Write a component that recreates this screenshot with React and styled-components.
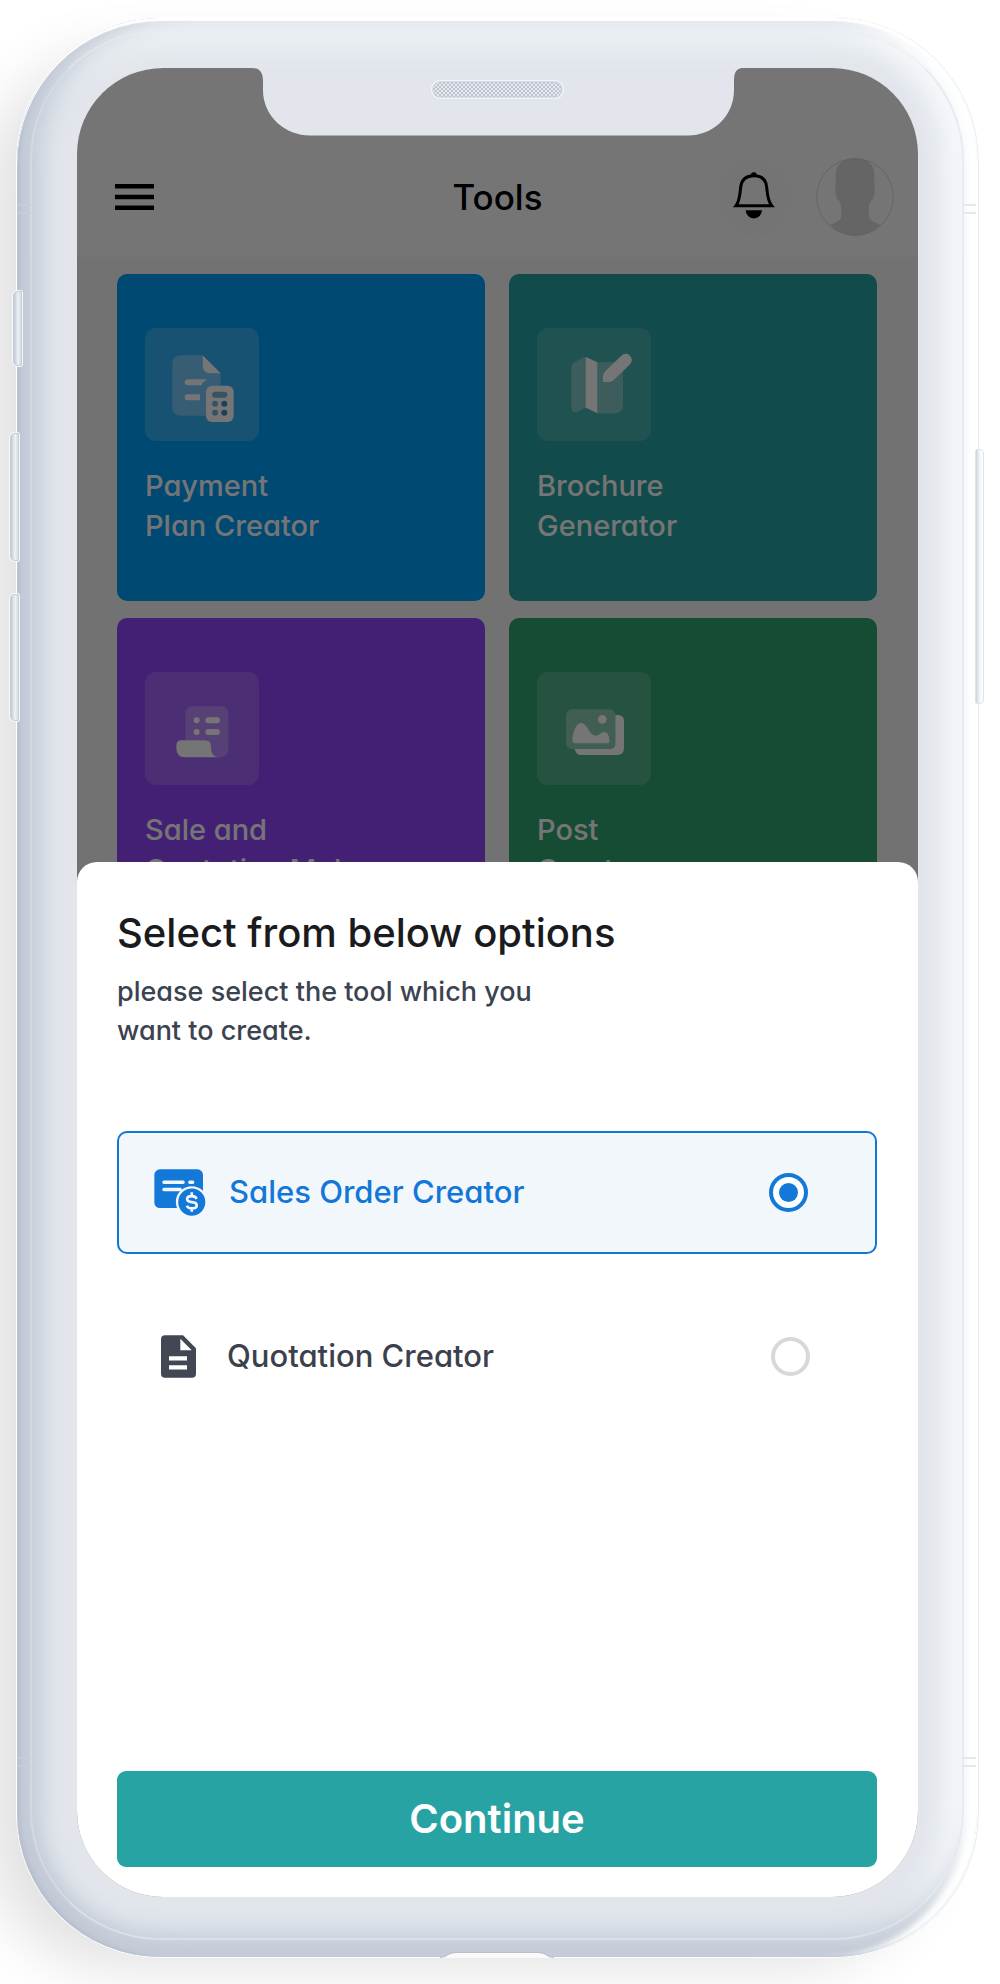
import React, { useState } from 'react';
import styled, { createGlobalStyle, css } from 'styled-components';

const GlobalStyle = createGlobalStyle`
  *, *::before, *::after { box-sizing: border-box; }
  body {
    margin: 0;
    background: #ffffff;
    font-family: Inter, "Open Sans", "Liberation Sans", sans-serif;
    font-feature-settings: "cv11";
    -webkit-font-smoothing: antialiased;
  }
  h1, h2, h3, p { margin: 0; }
  button, input { font: inherit; font-feature-settings: inherit; }
`;

const Page = styled.div`
  display: flex;
  min-height: 100vh;
  padding: 18px 23px 27px 17px;
  overflow: hidden;
`;

const Phone = styled.div`
  position: relative;
  display: flex;
  flex: 1;
  min-width: 0;
  padding: 50px 59px 60px 60px;
  border-radius: 144px;
  background: #e2e6ec;
  box-shadow:
    inset 0 3px 1px 0 #ffffff,
    inset 3px -1px 3px 0 #b8c0ce,
    inset -14px 0 6px -2px #fdfefe,
    inset 26px 0 26px -4px #c0c8d5,
    inset 0 -28px 26px -4px #c3cbd6,
    inset -34px 0 24px -2px #f7f9fb,
    inset 0 32px 26px -4px #eef2f5,
    0 0 0 1px #ffffff,
    1px 0 0 1px #ececec,
    -44px 24px 60px -14px rgba(0, 0, 0, 0.12);
`;

const Rim = styled.div`
  position: absolute;
  inset: 12px 13px 17px 13px;
  border: 2px solid;
  border-color: rgba(232, 237, 243, 0.5) rgba(228, 234, 241, 0.9) rgba(224, 229, 237, 0.7) rgba(216, 222, 231, 0.7);
  border-radius: 130px;
  pointer-events: none;
`;

const SideKey = styled.span`
  position: absolute;
  top: ${(p) => p.$top}px;
  height: ${(p) => p.$height}px;
  width: 9px;
  border: 1px solid #c5ccd6;
  background: linear-gradient(90deg, #c3cad5, #eef2f6 60%, #d5dbe4);
  ${(p) =>
    p.$side === 'left'
      ? css`left: ${p.$slim ? -4 : -7}px; border-radius: 5px 2px 2px 5px; box-shadow: 0 0 0 1px #f7f8fa;`
      : css`right: -7px; border-color: #dfe4ea; background: linear-gradient(90deg, #ccd3dd, #f2f5f8 50%, #ffffff); border-radius: 2px 4px 4px 2px;`}
`;

const Antenna = styled.span`
  position: absolute;
  ${(p) => (p.$edge === 'top' ? 'top: 186px;' : 'bottom: 190px;')}
  ${(p) => (p.$side === 'left' ? 'left: 1px;' : 'right: 1px;')}
  width: 13px;
  height: 10px;
  border: solid ${(p) => (p.$side === 'left' ? '#c6cdd8' : '#e3e8ef')};
  border-width: 2px 0;
`;

const BottomLip = styled.svg`
  position: absolute;
  bottom: -1px;
  left: 50%;
  width: 114px;
  height: 8px;
  transform: translateX(-50%);
`;

const Screen = styled.div`
  position: relative;
  display: grid;
  flex: 1;
  min-width: 0;
  grid-template: 1fr / 1fr;
  overflow: hidden;
  border-radius: 86px;
  background: #f8f8f8;
`;

const NotchShape = styled.svg`
  position: absolute;
  top: -1px;
  left: 50%;
  width: 492px;
  height: 69px;
  transform: translateX(-50%);
`;

const ToolsView = styled.main`
  position: relative;
  grid-area: 1 / 1;
  min-width: 0;
`;

const Dim = styled.div`
  position: absolute;
  inset: 0;
  background: rgba(0, 0, 0, 0.54);
`;

const TopBar = styled.header`
  display: grid;
  grid-template-columns: 1fr auto 1fr;
  align-items: center;
  height: 189px;
  padding: 68px 24px 0;
  background: #ffffff;
`;

const IconButton = styled.button`
  display: flex;
  width: fit-content;
  padding: ${(p) => (p.$round ? '0' : '14px')};
  border: 0;
  border-radius: ${(p) => (p.$round ? '50%' : '0')};
  background: ${(p) => (p.$round ? '#fcfcfc' : 'transparent')};
  color: #000000;
`;

const BarTitle = styled.h1`
  font-size: 35px;
  line-height: 48px;
  font-weight: 500;
  color: #000000;
`;

const Actions = styled.div`
  display: flex;
  align-items: center;
  justify-content: flex-end;
  gap: 22px;
`;

const CardGrid = styled.section`
  display: grid;
  grid-template-columns: 1fr 1fr;
  gap: 17px 24px;
  padding: 17px 41px 0 40px;
`;

const Card = styled.article`
  display: flex;
  flex-direction: column;
  align-items: flex-start;
  gap: 25px;
  height: 327px;
  padding: 54px 28px;
  border-radius: 10px;
  background: ${(p) => p.$color};
`;

const Tile = styled.div`
  display: flex;
  width: 114px;
  height: 113px;
  border-radius: 11px;
  background: rgba(255, 255, 255, ${(p) => p.$alpha});
`;

const CardTitle = styled.h2`
  font-size: 29px;
  line-height: 40px;
  font-weight: 500;
  color: #ffffff;
  white-space: pre-line;
`;

const Sheet = styled.form`
  position: relative;
  grid-area: 1 / 1;
  display: flex;
  flex-direction: column;
  min-width: 0;
  margin-top: 794px;
  padding: 45px 41px 30px 40px;
  border-radius: 20px 20px 0 0;
  background: #ffffff;
`;

const SheetTitle = styled.h2`
  font-size: 40px;
  line-height: 52px;
  font-weight: 500;
  color: #1b1b1d;
`;

const Hint = styled.p`
  max-width: 440px;
  margin-top: 13px;
  font-size: 27px;
  line-height: 39px;
  font-weight: 500;
  color: #3b4350;
`;

const Options = styled.div`
  display: flex;
  flex-direction: column;
  gap: 41px;
  margin-top: 81px;
`;

const Option = styled.label`
  display: flex;
  align-items: center;
  gap: 23px;
  height: 123px;
  padding: 0 67px 0 35px;
  border-radius: 10px;
  font-size: 31px;
  line-height: 40px;
  font-weight: 500;
  color: #3b414c;
  cursor: pointer;
  ${(p) =>
    p.$selected &&
    css`
      border: 2px solid #1277d4;
      background: #f2f7fc;
      color: #1277d6;
    `}
`;

const OptionIcon = styled.span`
  display: flex;
  justify-content: center;
  width: 52px;
`;

const OptionName = styled.span`
  flex: 1;
  padding-bottom: 2px;
`;

const Radio = styled.input`
  appearance: none;
  display: grid;
  place-items: center;
  width: 39px;
  height: 39px;
  margin: 0;
  border: 4px solid #d8d8d8;
  border-radius: 50%;
  background: #ffffff;

  &:checked { border-color: #1478d8; }
  &:checked::before {
    content: "";
    width: 19px;
    height: 19px;
    border-radius: 50%;
    background: #1478d8;
  }
`;

const Continue = styled.button`
  height: 96px;
  margin-top: auto;
  border: 0;
  border-radius: 9px;
  background: #28a3a3;
  color: #ffffff;
  font-size: 40px;
  line-height: 48px;
  font-weight: 600;
`;

const MenuIcon = () => (
  <svg width="39" height="26" viewBox="0 0 39 26" aria-hidden="true">
    <path d="M0 2.3h39M0 13h39M0 23.7h39" stroke="currentColor" strokeWidth="4.4" />
  </svg>
);

const BellIcon = () => (
  <svg width="80" height="80" viewBox="643 470 240 240" aria-hidden="true">
    <path d="M709 616C720 602 721 582 723 560C726 536 740 526 762 526C785 526 799 536 801 560C803 582 804 602 816 616Z" fill="none" stroke="#000" strokeWidth="9" />
    <path d="M754 528v-5a8 7 0 0 1 17 0v5zM738 630h49a24 24 0 0 1-49 0z" />
  </svg>
);

const Avatar = () => (
  <svg width="78" height="78" viewBox="948 474 236 236" role="img" aria-label="Profile">
    <circle cx="1066" cy="592" r="117" fill="#fff" />
    <path fill="#dcdcdc" d="M1007 525C1007 490 1035 475 1066 475C1100 475 1125 492 1125 525L1124 558Q1128 562 1125 580Q1122 600 1116 602Q1108 612 1108 625V655Q1110 662 1143 677Q1108 709 1066 709Q1024 709 990 677Q1022 664 1024 655V625Q1024 612 1016 602Q1010 600 1007 580Q1004 562 1008 558Z" />
    <circle cx="1066" cy="592" r="116" fill="none" stroke="#b9c8e4" strokeWidth="2" />
  </svg>
);

const PaymentIcon = () => (
  <svg width="114" height="113" viewBox="135 203 342 339" fill="#fff" aria-hidden="true">
    <path opacity=".33" d="M243 285H308V315Q310 339 332 339H362V376H342Q318 376 318 400V466H243Q217 466 217 440V311Q217 285 243 285Z" />
    <path d="M308 285L362 339H330Q308 339 308 315ZM263 357H322Q310 362 304 375H263a9 9 0 0 1 0-18ZM263 402H300V420H263a9 9 0 0 1 0-18Z" />
    <rect x="318" y="376" width="83" height="109" rx="18" />
    <rect x="336" y="394" width="46" height="18" rx="9" fill="#76b4dc" />
    <g fill="#378fc4">
      <circle cx="345" cy="430" r="9" fill="#76b0d4" />
      <circle cx="373" cy="430" r="9" />
      <circle cx="345" cy="457" r="9" fill="#76b0d4" />
      <circle cx="373" cy="457" r="9" />
    </g>
  </svg>
);

const BrochureIcon = () => (
  <svg width="114" height="113" viewBox="111 203 342 339" fill="#fff" aria-hidden="true">
    <path opacity=".33" d="M214 322Q214 310 226 304L248 293Q253 290 257 291V443Q248 444 240 451Q214 465 214 440ZM292 306H345Q369 306 369 330V435Q369 459 345 459H292Z" />
    <path d="M257 291Q262 291 266 294L292 306V459L266 446Q262 443 257 443ZM309 365V350Q309 340 316 333L364 286a18 18 0 0 1 26 26L342 358Q335 365 325 365Z" />
  </svg>
);

const ReceiptIcon = () => (
  <svg width="114" height="113" viewBox="135 185 342 339" fill="#fff" aria-hidden="true">
    <path opacity=".26" d="M280 288H361q24 0 24 24V415q0 26-27 26Q333 440 333 415V408Q333 390 315 390H256V312q0-24 24-24Z" />
    <path d="M245 390H315Q333 390 333 408V415Q335 440 358 441H255Q229 440 229 412V406Q229 390 245 390Z" />
    <circle cx="290" cy="330" r="9" />
    <circle cx="290" cy="365" r="9" />
    <rect x="316" y="321" width="44" height="18" rx="9" />
    <rect x="316" y="356" width="44" height="18" rx="9" />
  </svg>
);

const GalleryIcon = () => (
  <svg width="114" height="113" viewBox="111 185 342 339" fill="#fff" aria-hidden="true">
    <rect opacity=".33" x="198" y="297" width="148" height="119" rx="18" />
    <path d="M346 314h8q18 0 18 18V414q0 20-20 20H243q-14 0-19-18H328q18 0 18-18Z" />
    <circle cx="307" cy="327" r="13" />
    <path d="M217 390C217 368 228 338 243 338C262 338 268 376 286 376C300 376 302 365 314 365C324 365 328 380 329 392Q329 399 320 399H226Q217 399 217 390Z" />
  </svg>
);

const OrderIcon = () => (
  <svg width="52" height="47" viewBox="161 147 157 142" aria-hidden="true">
    <rect x="162" y="148" width="147" height="117" rx="17" fill="#1478d8" />
    <path d="M191 187H249M269 187H278M191 209H240" stroke="#f2f7fc" strokeWidth="10" strokeLinecap="round" />
    <circle cx="275" cy="247" r="48" fill="#f2f7fc" />
    <circle cx="275" cy="247" r="41" fill="#1478d8" />
    <path d="M275 217V228M275 265V276M290 237Q286 229 275 229Q261 229 261 238Q261 246 275 247Q290 248 290 257Q290 266 275 266Q264 266 260 258" fill="none" stroke="#f2f7fc" strokeWidth="8" />
  </svg>
);

const DocumentIcon = () => (
  <svg width="35" height="43" viewBox="180 645 105 128" aria-hidden="true">
    <path d="M192 645H246L285 684V761q0 12-12 12H192q-12 0-12-12V657q0-12 12-12Z" fill="#424853" />
    <path d="M238 656V690H272ZM204 708h54v13h-54zM204 735h54v13h-54z" fill="#fff" />
  </svg>
);

const Notch = () => (
  <NotchShape viewBox="0 0 492 69" aria-hidden="true">
    <defs>
      <pattern id="mesh" width="4" height="4" patternUnits="userSpaceOnUse">
        <rect width="4" height="4" fill="#e6e9ee" />
        <path d="M0 0l4 4M4 0l-4 4" stroke="#bfc5d0" strokeWidth="1" />
      </pattern>
    </defs>
    <path d="M0 0H492V1H491C484 1 482 6 482 14V23C482 50 460 68.500 436 68.500H58C34 68.500 11 50 11 23V14C11 6 8 1 0 1Z" fill="#e2e6ec" />
    <rect x="179" y="13" width="133" height="19" rx="9" fill="#f1f4f7" />
    <rect x="181" y="15" width="129" height="15" rx="7" fill="url(#mesh)" stroke="#c3c9d5" />
  </NotchShape>
);

const tools = [
  { title: 'Payment\nPlan Creator', color: '#009ffa', alpha: 0.2, Icon: PaymentIcon },
  { title: 'Brochure\nGenerator', color: '#25a3a3', alpha: 0.17, Icon: BrochureIcon },
  { title: 'Sale and\nQuotation Maker', color: '#9446fe', alpha: 0.17, Icon: ReceiptIcon },
  { title: 'Post\nCreator', color: '#30a771', alpha: 0.17, Icon: GalleryIcon },
];

const choices = [
  { id: 'sales-order', name: 'Sales Order Creator', Icon: OrderIcon },
  { id: 'quotation', name: 'Quotation Creator', Icon: DocumentIcon },
];

export default function App() {
  const [choice, setChoice] = useState('sales-order');

  return (
    <>
      <GlobalStyle />
      <Page>
        <Phone>
          <SideKey $side="left" $slim $top={273} $height={75} />
          <SideKey $side="left" $top={415} $height={128} />
          <SideKey $side="left" $top={576} $height={127} />
          <SideKey $side="right" $top={431} $height={255} />
          <Rim />
          <Antenna $side="left" $edge="top" />
          <Antenna $side="right" $edge="top" />
          <Antenna $side="left" $edge="bottom" />
          <Antenna $side="right" $edge="bottom" />
          <BottomLip viewBox="0 0 114 8" aria-hidden="true">
            <path d="M0 8C7 8 7 3 16 3H98C107 3 107 8 114 8Z" fill="#fafafa" />
            <path d="M0 7.500C7 7.500 7 2.500 16 2.500H98C107 2.500 107 7.500 114 7.500" fill="none" stroke="#b9bfca" />
          </BottomLip>
          <Screen>
            <ToolsView>
              <TopBar>
                <IconButton type="button" aria-label="Open menu">
                  <MenuIcon />
                </IconButton>
                <BarTitle>Tools</BarTitle>
                <Actions>
                  <IconButton type="button" $round aria-label="Notifications">
                    <BellIcon />
                  </IconButton>
                  <Avatar />
                </Actions>
              </TopBar>
              <CardGrid>
                {tools.map(({ title, color, alpha, Icon }) => (
                  <Card key={title} $color={color}>
                    <Tile $alpha={alpha}>
                      <Icon />
                    </Tile>
                    <CardTitle>{title}</CardTitle>
                  </Card>
                ))}
              </CardGrid>
              <Dim />
              <Notch />
            </ToolsView>
            <Sheet onSubmit={(event) => event.preventDefault()}>
              <SheetTitle>Select from below options</SheetTitle>
              <Hint>please select the tool which you want to create.</Hint>
              <Options role="radiogroup" aria-label="Tool">
                {choices.map(({ id, name, Icon }) => (
                  <Option key={id} htmlFor={id} $selected={choice === id}>
                    <OptionIcon>
                      <Icon />
                    </OptionIcon>
                    <OptionName>{name}</OptionName>
                    <Radio
                      type="radio"
                      id={id}
                      name="tool"
                      value={id}
                      checked={choice === id}
                      onChange={() => setChoice(id)}
                    />
                  </Option>
                ))}
              </Options>
              <Continue type="submit">Continue</Continue>
            </Sheet>
          </Screen>
        </Phone>
      </Page>
    </>
  );
}
